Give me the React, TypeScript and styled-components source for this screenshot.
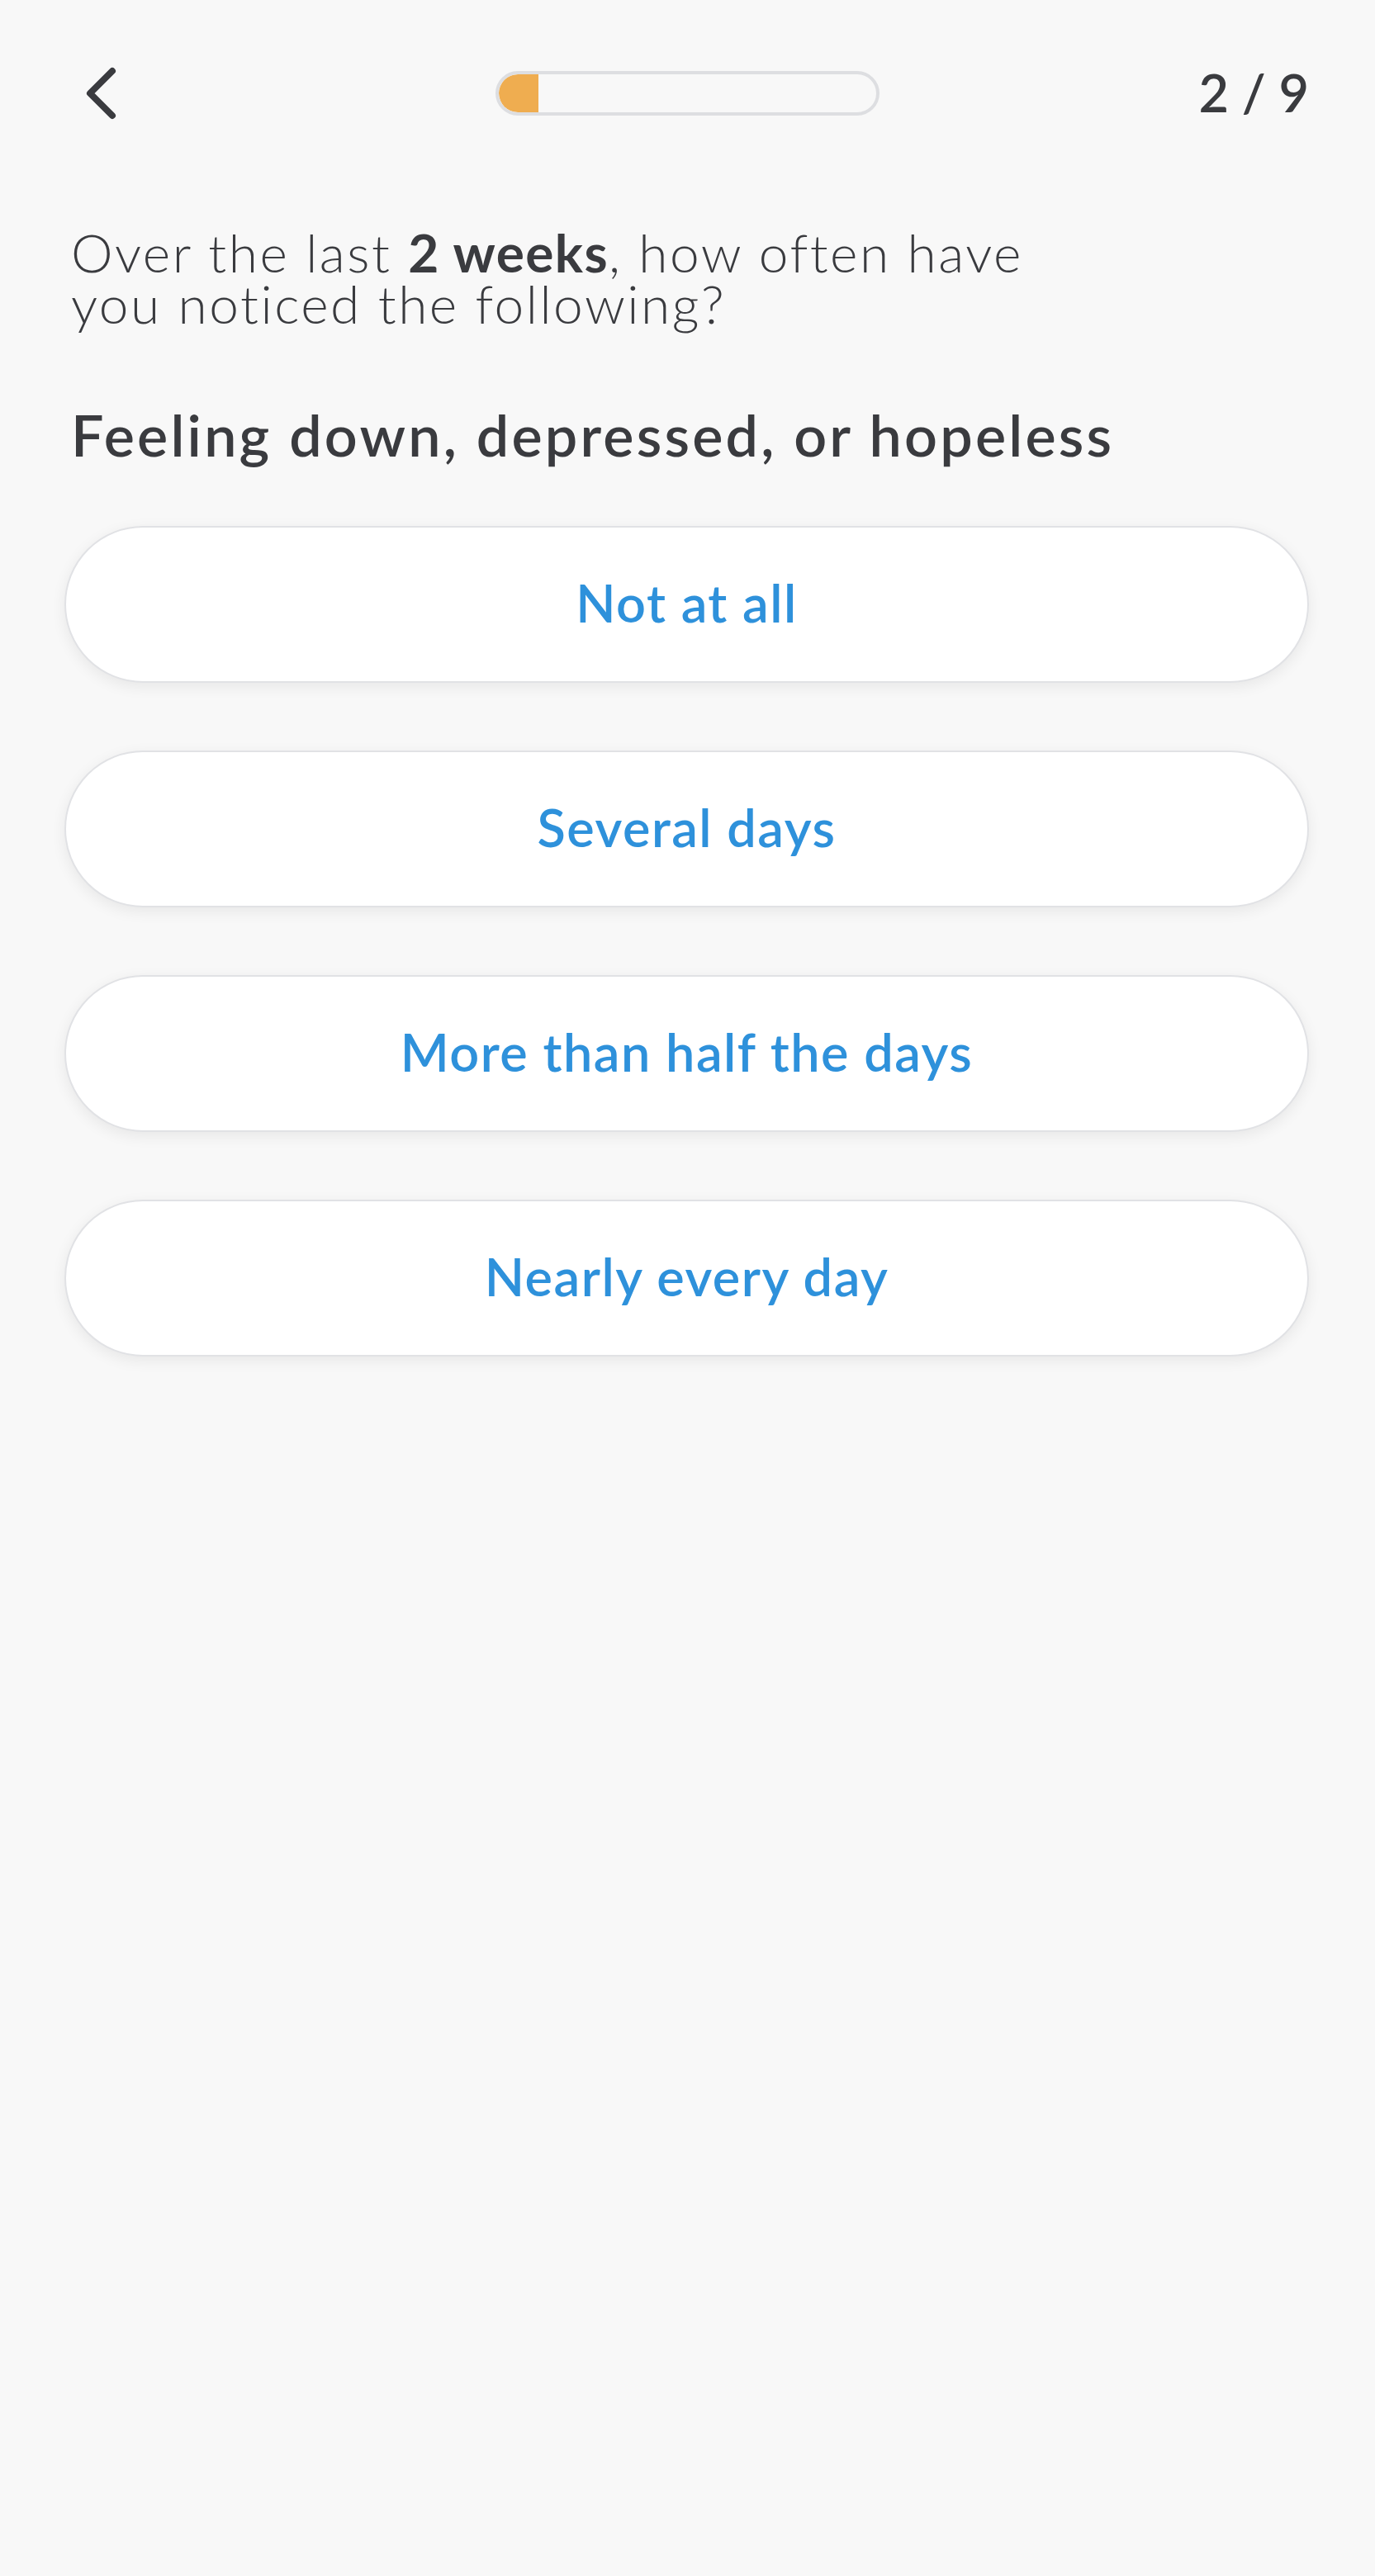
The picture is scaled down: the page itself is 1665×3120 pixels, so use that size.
import React from "react";
import styled, { createGlobalStyle } from "styled-components";

const GlobalStyle = createGlobalStyle`
  html, body {
    margin: 0;
    padding: 0;
    background: #f8f8f8;
  }
  body {
    font-family: Lato, "Liberation Sans", sans-serif;
    color: #3a3b3f;
  }
  * { box-sizing: border-box; }
`;

const Page = styled.div`
  min-height: 3120px;
  background: #f8f8f8;
  padding-top: 58px;
`;

const Header = styled.header`
  display: grid;
  grid-template-columns: 1fr auto 1fr;
  align-items: center;
  height: 110px;
  padding: 0 80px;
`;

const BackButton = styled.button`
  justify-self: start;
  margin-left: 20px;
  display: flex;
  align-items: center;
  justify-content: center;
  width: 44px;
  height: 64px;
  padding: 0;
  border: none;
  background: transparent;
  cursor: pointer;
`;

const Track = styled.div`
  width: 465px;
  height: 54px;
  border: 4px solid #dddee1;
  border-radius: 27px;
  background: #f8f8f8;
  overflow: hidden;
  display: flex;
`;

const Fill = styled.div`
  height: 100%;
  background: #efad50;
  border-radius: 23px 0 0 23px;
`;

const Counter = styled.div`
  justify-self: end;
  font-size: 63px;
  font-weight: 600;
  letter-spacing: 0;
  color: #3a3b3f;
  line-height: 1;
  margin-top: -4px;
`;

const Content = styled.main`
  padding: 107px 0 0 86px;
`;

const Intro = styled.p`
  margin: 0;
  font-size: 64px;
  line-height: 62px;
  font-weight: 300;
  letter-spacing: 2.5px;
  color: #3a3b3f;
  max-width: 1400px;
`;

const IntroLine = styled.span`
  display: block;
  height: 62px;
`;

const Strong = styled.b`
  font-weight: 700;
  letter-spacing: 1.4px;
`;

const Prompt = styled.h2`
  margin: 85px 0 0;
  font-size: 70px;
  line-height: 84px;
  font-weight: 600;
  letter-spacing: 3.2px;
  color: #3a3b3f;
`;

const Options = styled.div`
  display: flex;
  flex-direction: column;
  gap: 82px;
  padding: 69px 80px 0 78px;
`;

const Option = styled.button`
  height: 190px;
  width: 100%;
  padding: 0 0 6px;
  border: 2px solid #e1e2e5;
  border-radius: 95px;
  background: #ffffff;
  box-shadow: 0 5px 18px rgba(0, 0, 0, 0.07);
  font-family: Lato, "Liberation Sans", sans-serif;
  font-size: 63px;
  font-weight: 600;
  letter-spacing: 1.5px;
  color: #2e91db;
  cursor: pointer;
  display: flex;
  align-items: center;
  justify-content: center;
`;

const options = ["Not at all", "Several days", "More than half the days", "Nearly every day"];

export default function App() {
  const progress = 2 / 9;
  return (
    <>
      <GlobalStyle />
      <Page>
        <Header>
          <BackButton aria-label="Back">
            <svg width="44" height="64" viewBox="0 0 44 64" fill="none">
              <path
                d="M36 5 L9 32 L36 59"
                stroke="#3a3b3f"
                strokeWidth="8"
                strokeLinecap="round"
                strokeLinejoin="round"
              />
            </svg>
          </BackButton>
          <Track>
            <Fill style={{ width: `${Math.round(progress * 216)}px` }} />
          </Track>
          <Counter>2 / 9</Counter>
        </Header>
        <Content>
          <Intro>
            <IntroLine>
              Over the last <Strong>2 weeks</Strong>, how often have
            </IntroLine>
            <IntroLine>you noticed the following?</IntroLine>
          </Intro>
          <Prompt>Feeling down, depressed, or hopeless</Prompt>
        </Content>
        <Options>
          {options.map((o) => (
            <Option key={o}>{o}</Option>
          ))}
        </Options>
      </Page>
    </>
  );
}
